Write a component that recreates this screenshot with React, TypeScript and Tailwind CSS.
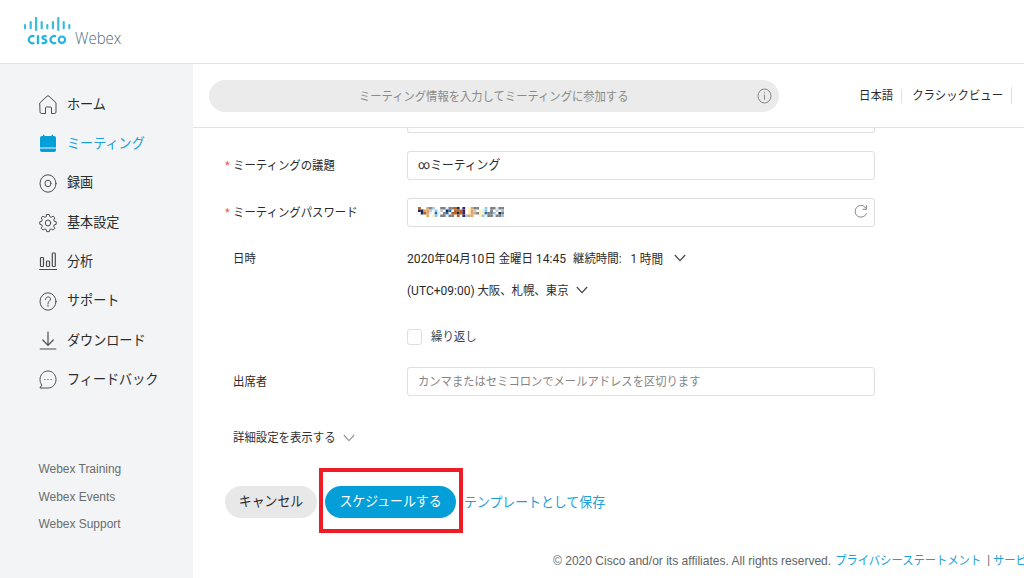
import type { ReactNode } from "react";

type TextProps = { children: ReactNode; className?: string };

/** Slightly condensed label text used through the whole page. */
function T({ children, className = "" }: TextProps) {
  return (
    <span className={`inline-block shrink-0 origin-center scale-y-[1.08] whitespace-pre ${className}`}>
      {children}
    </span>
  );
}

function Logo() {
  const bars = [
    [24.3, 25.2, 28.3],
    [30, 22, 28.3],
    [35.4, 18, 30],
    [41, 22, 28.3],
    [46.6, 25.2, 28.3],
    [52.2, 22, 28.3],
    [57.6, 18, 30],
    [63, 22, 28.3],
    [68.6, 25.2, 28.3],
  ];
  return (
    <div className="flex flex-col">
      <svg width="50" height="15" viewBox="23 17 50 15" className="-ml-px" aria-hidden="true">
        {bars.map(([x, a, b]) => (
          <line key={x} x1={x + 0.7} x2={x + 0.7} y1={a} y2={b} stroke="#3bbbe0" strokeWidth="2.2" strokeLinecap="round" />
        ))}
      </svg>
      <div className="flex h-4 items-center">
        <svg width="40" height="12" viewBox="27 33 40 12" className="ml-[3px]" fill="none" stroke="#22b4de" strokeWidth="2.2" aria-hidden="true">
          <path d="M34.3 35.6a3.6 3.6 0 1 0 0 6.2M37.9 34.3v9M46.6 35.3c-5.2-1.2-5 2.4-2.3 3 3.4.8 2.900 4.600-2.600 3.600M56 35.600a3.600 3.600 0 1 0 0 6.200" />
          <circle cx="61.900" cy="38.700" r="3.200" />
        </svg>
        <span className="-mt-[4px] ml-[8px] inline-block origin-left scale-x-[0.91] font-['Open_Sans','Noto_Sans',sans-serif] text-[16.500px] font-light leading-4 text-[#4f6b80]">Webex</span>
      </div>
    </div>
  );
}

const icons: Record<string, ReactNode> = {
  home: <path d="M1 7.800 8 1.200q1-.8 2 0l7 6.600V17q0 1.500-1.500 1.500h-3V13q0-1-1-1h-4q-1 0-1 1v5.500h-4Q1 18.500 1 17Z" />,
  meeting: (
    <g fill="#049fd9" stroke="none">
      <path d="M3 2h1V.8h1.500V2h7V.8H14V2h1q2 0 2 2v9.500H1V4q0-2 2-2ZM1 14.500h16V16q0 2-2 2H3q-2 0-2-2Z" />
    </g>
  ),
  record: (
    <>
      <ellipse cx="9" cy="9.500" rx="8" ry="8.700" />
      <ellipse cx="9" cy="9.500" rx="3" ry="3.300" />
    </>
  ),
  settings: (
    <>
      <path d="M7.700 1.500h2.600l.5 2.200 1.300.7 2-1.300 1.700 1.800-1.100 2.100.5 1.200 2 .5v2.600l-2 .6-.6 1.300 1.200 2.100-1.700 1.800-2-1.200-1.300.6-.5 2.100H7.700l-.5-2.100-1.300-.6-2 1.200-1.700-1.800 1.200-2.100-.6-1.300-2-.6V8.700l2-.5.5-1.200L2.200 4.900l1.700-1.800 2 1.300 1.300-.7Z" />
      <ellipse cx="9" cy="10" rx="2.700" ry="3" />
    </>
  ),
  analytics: (
    <g strokeWidth="1.200">
      <rect x="1.500" y="5.500" width="3" height="9" rx=".8" />
      <rect x="7.500" y="9" width="3" height="5.500" rx=".8" />
      <rect x="13.300" y="1" width="3" height="13.500" rx=".8" />
      <path d="M.7 17.500h17" />
    </g>
  ),
  help: (
    <>
      <ellipse cx="9" cy="9.500" rx="8" ry="8.700" />
      <path d="M6.600 7.500c0-3.600 4.900-3.400 4.900-.4 0 1.900-2.500 2-2.500 4.400M9 13v1.200" />
    </>
  ),
  download: <path strokeWidth="1.200" d="M9 1v13.200M3.800 9 9 14.300 14.200 9M1.200 18h15.600" />,
  feedback: (
    <>
      <path d="M1.300 18h7.700c4.800 0 8-3.800 8-8.500S13.500 1 9 1 1 4.800 1 9.500c0 2.500.6 3.700 1.600 5.200Z" />
      <path strokeLinecap="butt" d="M5.400 9.500h1M8.500 9.500h1M11.600 9.500h1" />
    </>
  ),
};

const nav = [
  ["home", "ホーム"],
  ["meeting", "ミーティング"],
  ["record", "録画"],
  ["settings", "基本設定"],
  ["analytics", "分析"],
  ["help", "サポート"],
  ["download", "ダウンロード"],
  ["feedback", "フィードバック"],
];

function Sidebar() {
  return (
    <aside className="flex w-[193px] shrink-0 flex-col bg-[#f2f4f5] pt-[21px]">
      <nav>
        {nav.map(([icon, label]) => (
          <a key={icon} className="flex h-[39.300px] items-center pl-[39px]">
            <svg width="18" height="20" viewBox="0 0 18 20" fill="none" stroke="#4b4d50" strokeWidth="1" strokeLinejoin="round" strokeLinecap="round" className="mt-px" aria-hidden="true">
              {icons[icon]}
            </svg>
            <T className={`ml-[10px] text-[13.100px] ${icon === "meeting" ? "text-[#1ba0d8]" : "text-[#2b2b2b]"}`}>{label}</T>
          </a>
        ))}
      </nav>
      <div className="mt-[57.300px] flex flex-col pl-[38.500px] text-[11.950px] text-[#6a6c6e]">
        {["Webex Training", "Webex Events", "Webex Support"].map((t) => (
          <a key={t} className="flex h-[27.300px] items-center">
            <T className="font-['Liberation_Sans',sans-serif]">{t}</T>
          </a>
        ))}
      </div>
    </aside>
  );
}

function Chevron({ className = "" }: { className?: string }) {
  return (
    <svg width="12" height="8" viewBox="0 0 12 8" fill="none" stroke="currentColor" className={`shrink-0 ${className}`} aria-hidden="true">
      <path d="M.8 1 6 6.700 11.200 1" strokeWidth="1.200" />
    </svg>
  );
}

const mosaic: Record<string, string> = {
  n: "#162a5c", k: "#7b7d80", b: "#236ba8", l: "#8fc5ef", o: "#b8601c",
  t: "#dba66c", y: "#fff3b5", g: "#c5cad2", c: "#e0f0ff", p: "#3d2463",
};
const mosaicRows = [
  "o..tkl..kkckkon.p.ytkk..l.kkckk",
  "nnttg.l.g.nb.ooop.ytg.ycl.k.g.l",
  ".notc.bc.kb.oonop.yttkyybkkl.nk",
  "...t.yl.kkckk.o.pltt..ylckkckkl",
];

function Scrambled() {
  return (
    <svg width="86" height="10" viewBox="0 0 31 4" preserveAspectRatio="none" className="-mt-px" aria-hidden="true">
      {mosaicRows.flatMap((row, y) =>
        [...row].map((c, x) => (c === "." ? null : <rect key={`${x}-${y}`} x={x} y={y} width="1" height="1" fill={mosaic[c]} />)),
      )}
    </svg>
  );
}

function Field({ children }: { children: ReactNode }) {
  return (
    <div className="flex h-[29px] w-[468px] shrink-0 items-center rounded-[3px] border border-[#dedede] bg-white px-[10px]">{children}</div>
  );
}

function Label({ children, required }: { children: ReactNode; required?: boolean }) {
  return (
    <div className="flex w-[182px] shrink-0 items-center pt-[2px]">
      <span className="w-2 shrink-0 text-[11px] text-[#f4534d]">{required ? "*" : ""}</span>
      <T>{children}</T>
    </div>
  );
}

function TopBar() {
  return (
    <div className="flex h-16 shrink-0 items-center border-b border-[#e2e2e2] pl-4 text-[11.400px]">
      <div className="flex h-8 w-[570px] shrink-0 items-center rounded-full bg-[#ebebeb] pl-[150px] pr-[7px]">
        <T className="pt-[5px] text-[11.300px] text-[#8a8a8a]">ミーティング情報を入力してミーティングに参加する</T>
        <svg width="15" height="16" viewBox="0 0 15 16" fill="none" stroke="#858585" className="ml-auto" aria-hidden="true">
          <ellipse cx="7.500" cy="8" rx="6.500" ry="7" />
          <path d="M7.500 6.700v5M7.500 4.200v1.200" />
        </svg>
      </div>
      <T className="ml-20 pt-[2px]">日本語</T>
      <span className="ml-2 h-[14px] w-px shrink-0 bg-[#ddd]" />
      <T className="ml-[10px] pt-[2px]">クラシックビュー</T>
      <span className="ml-2 h-[17px] w-px shrink-0 bg-[#ddd]" />
    </div>
  );
}

export default function App() {
  return (
    <div className="flex h-[578px] w-[1024px] flex-col overflow-hidden bg-white font-['Roboto','Noto_Sans_CJK_JP',sans-serif] text-[#2b2b2b]">
      <header className="h-16 shrink-0 border-b border-[#e2e3e4] pl-6 pt-[17px]">
        <Logo />
      </header>
      <div className="flex min-h-0 flex-1">
        <Sidebar />
        <main className="flex min-w-0 flex-1 flex-col">
          <TopBar />
          <form className="flex flex-col pl-8 text-[11.400px]">
            <div className="ml-[182px] h-[5px] w-[468px] rounded-b-[3px] border border-t-0 border-[#dedede]" />
            <div className="mt-[18px] flex items-center">
              <Label required>ミーティングの議題</Label>
              <Field><T className="text-[11.800px]">∞ミーティング</T></Field>
            </div>
            <div className="mt-[18px] flex items-center">
              <Label required>ミーティングパスワード</Label>
              <Field>
                <Scrambled />
                <svg width="14" height="15" viewBox="0 0 14 15" fill="none" stroke="#858585" className="-mr-[4px] -mt-[3px] ml-auto" aria-hidden="true">
                  <path d="M12 4.500C9.500-.5 1.200.8 1.200 7.500S10.500 15 12.400 9.300M12.600 1.200v4.100H8.500" />
                </svg>
              </Field>
            </div>
            <div className="mt-[18px] flex h-7 items-center">
              <Label>日時</Label>
              <T className="text-[12.150px]">2020<span className="text-[11.400px]">年</span>04<span className="text-[11.400px]">月</span>10<span className="text-[11.400px]">日 金曜日</span> 14:45</T>
              <T className="ml-[7px] pt-px">継続時間:</T>
              <T className="ml-[9px] pt-px text-[11.600px]">1 時間</T>
              <Chevron className="-mt-[3px] ml-[11px] text-[#444]" />
            </div>
            <div className="mt-1 flex h-7 items-center">
              <T className="ml-[182px]"><span className="text-[12px]">(UTC+09:00)</span> 大阪、札幌、東京</T>
              <Chevron className="-mt-[2px] ml-[7px] text-[#444]" />
            </div>
            <div className="mt-[18px] flex h-7 items-center">
              <span className="ml-[182px] h-4 w-[15px] rounded-[3px] border border-[#dedede]" />
              <T className="ml-[9px] pt-px text-[#394350]">繰り返し</T>
            </div>
            <div className="mt-4 flex items-center">
              <Label>出席者</Label>
              <Field><T className="pt-[3px] text-[11.300px] text-[#858585]">カンマまたはセミコロンでメールアドレスを区切ります</T></Field>
            </div>
            <div className="mt-7 flex h-7 items-center">
              <T className="ml-2 pt-[2px] text-[#333]">詳細設定を表示する</T>
              <Chevron className="ml-[7px] text-[#999]" />
            </div>
            <div className="mt-[15px] flex h-[67px] items-start text-[12.900px]">
              <button type="button" className="mt-[19px] flex h-8 w-[92px] items-center justify-center rounded-full bg-[#e8e8e8]"><T>キャンセル</T></button>
              <div className="ml-[2px] mt-px flex h-[65px] w-[144px] justify-center border-4 border-[#ee1c25] pr-px pt-[14px]">
                <button type="button" className="flex h-8 w-[131px] items-center justify-center rounded-full bg-[#049fd9] text-white"><T>スケジュールする</T></button>
              </div>
              <T className="ml-px mt-[26px] text-[#1ba0d8]">テンプレートとして保存</T>
            </div>
          </form>
          <footer className="mt-[17px] flex h-5 items-center pl-[360px] text-[11.300px] text-[#626466]">
            <T className="font-['Liberation_Sans',sans-serif] text-[12.040px]">© 2020 Cisco and/or its affiliates. All rights reserved.</T>
            <T className="ml-1 pt-[3px] text-[11.300px] text-[#1ba0d8]">プライバシーステートメント</T>
            <T className="ml-[6px] pt-px">|</T>
            <T className="ml-[3px] pt-[3px] text-[#1ba0d8]">サービ</T>
          </footer>
        </main>
      </div>
    </div>
  );
}
